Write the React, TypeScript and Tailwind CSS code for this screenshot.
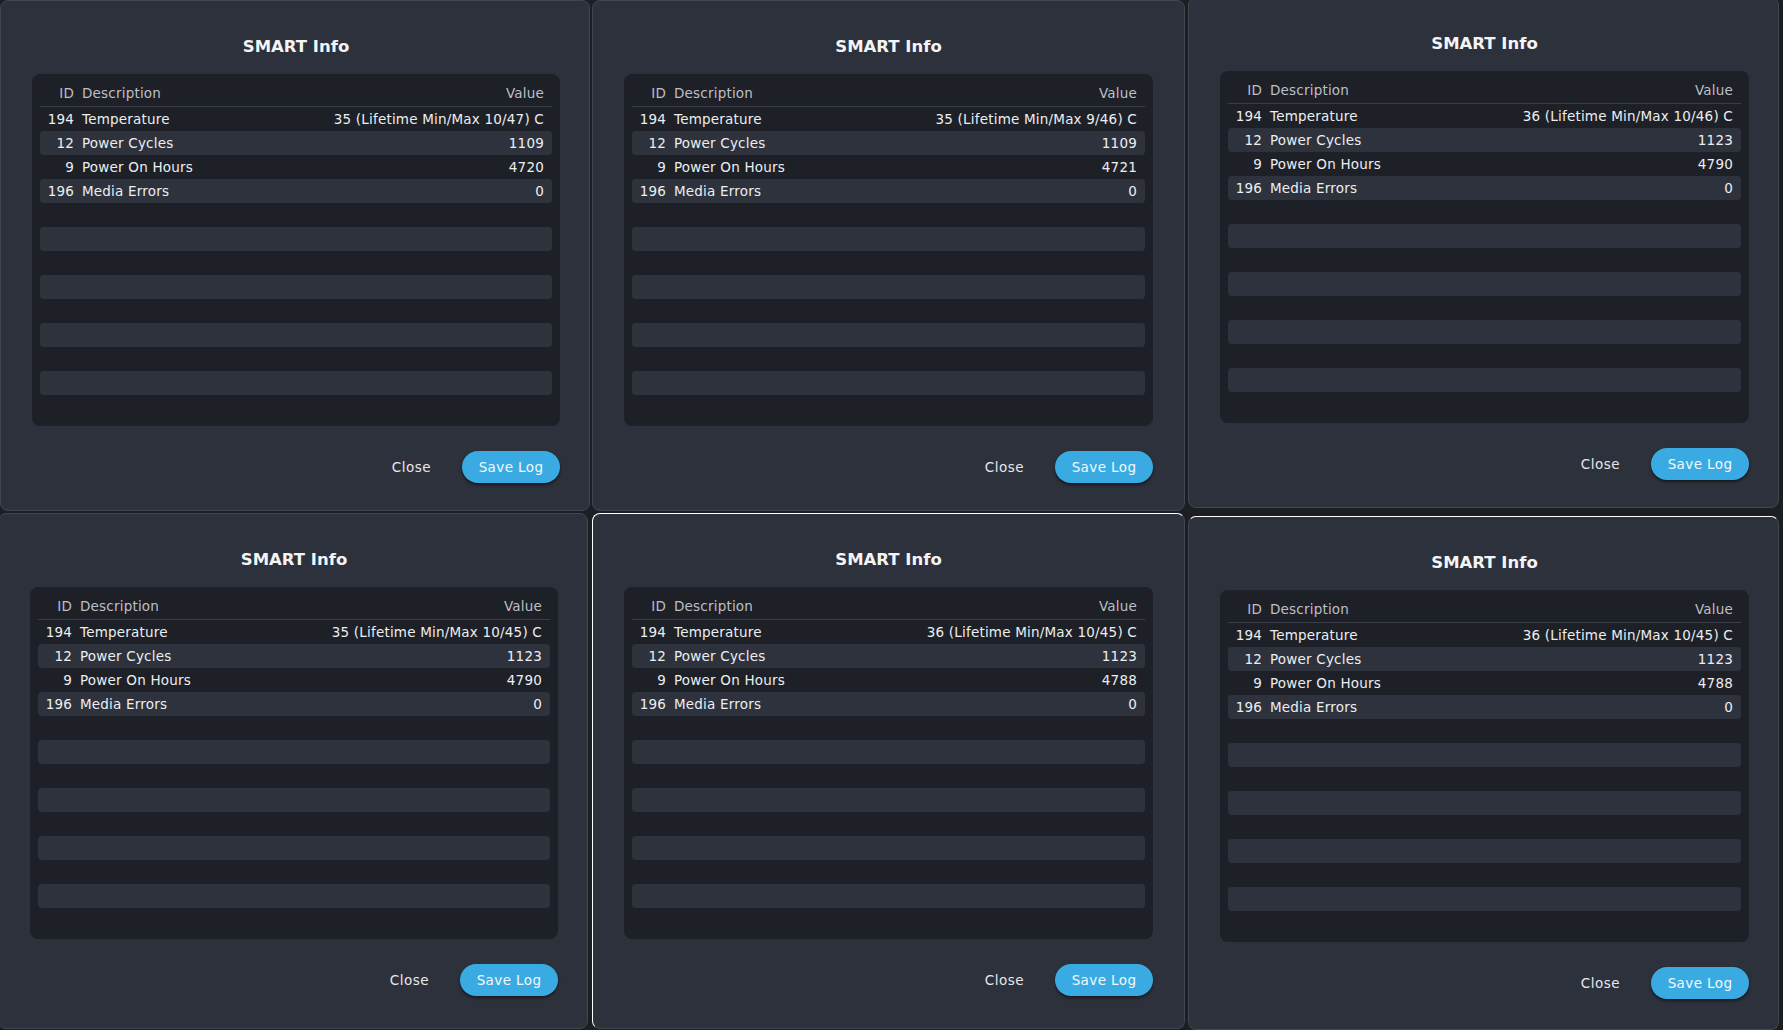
import React from 'react';

interface SmartRow {
  id: string;
  label: string;
  value: string;
}

interface DialogProps {
  rows: SmartRow[];
  className: string;
}

const snapshots = [
  { temp: '35 (Lifetime Min/Max 10/47) C', cycles: '1109', hours: '4720' },
  { temp: '35 (Lifetime Min/Max 9/46) C', cycles: '1109', hours: '4721' },
  { temp: '36 (Lifetime Min/Max 10/46) C', cycles: '1123', hours: '4790' },
  { temp: '35 (Lifetime Min/Max 10/45) C', cycles: '1123', hours: '4790' },
  { temp: '36 (Lifetime Min/Max 10/45) C', cycles: '1123', hours: '4788' },
  { temp: '36 (Lifetime Min/Max 10/45) C', cycles: '1123', hours: '4788' },
];

const toRows = (s: { temp: string; cycles: string; hours: string }): SmartRow[] => [
  { id: '194', label: 'Temperature', value: s.temp },
  { id: '12', label: 'Power Cycles', value: s.cycles },
  { id: '9', label: 'Power On Hours', value: s.hours },
  { id: '196', label: 'Media Errors', value: '0' },
];

const SmartDialog: React.FC<DialogProps> = ({ rows, className }) => {
  // pad the table out with empty striped rows like the real list view
  const filled: (SmartRow | null)[] = [...rows];
  while (filled.length < 13) filled.push(null);

  return (
    <div className={`flex flex-col rounded-[8px] border bg-[#2d313b] pl-[31px] ${className}`}>
      <h2 className="pt-[35px] pb-[16px] text-center text-[16.5px] leading-[22px] font-bold text-[#f3f4f6]">
        SMART Info
      </h2>

      <div className="h-[352px] overflow-hidden rounded-[8px] bg-[#1e2027] px-2 pt-2 tracking-[0.2px]">
        <div className="flex h-[25px] items-center border-b border-[#393d47] pb-[1px] text-[#bcbfc6]">
          <span className="w-[34px] text-right">ID</span>
          <span className="ml-[8px] flex-1">Description</span>
          <span className="pr-2">Value</span>
        </div>
        {filled.map((row, i) => (
          <div
            key={i}
            className={`flex h-[24px] items-center rounded-[4px] text-[#eceef0] ${
              i % 2 === 1 ? 'bg-[#2e323d]' : ''
            }`}
          >
            {row && (
              <>
                <span className="w-[34px] text-right">{row.id}</span>
                <span className="ml-[8px] flex-1">{row.label}</span>
                <span className="pr-2">{row.value}</span>
              </>
            )}
          </div>
        ))}
      </div>

      <div className="mt-[25px] flex items-center justify-end">
        <button className="tracking-[0.5px] text-[#e6e7ea]">Close</button>
        <button className="ml-[31px] h-[32px] w-[98px] rounded-full bg-[#3aabe2] tracking-[0.4px] text-[#f2f8fc] shadow-[0_2px_3px_rgba(0,0,0,0.5)]">
          Save Log
        </button>
      </div>
    </div>
  );
};

export default function App() {
  const data = snapshots.map(toRows);

  return (
    <div className="flex h-[1030px] w-[1783px] flex-col overflow-hidden bg-[#1c1e23] text-[13.5px] [font-family:'DejaVu_Sans',sans-serif]">
      {/* top row */}
      <div className="flex h-[511px] shrink-0">
        <SmartDialog rows={data[0]} className="h-[511px] w-[590px] pr-[29px] border-[#42464f]" />
        <SmartDialog rows={data[1]} className="ml-[2px] h-[511px] w-[593px] pr-[31px] border-[#42464f]" />
        <SmartDialog
          rows={data[2]}
          className="-mt-[3px] ml-[3px] h-[511px] w-[591px] pr-[29px] border-[#42464f]"
        />
      </div>

      {/* bottom row */}
      <div className="mt-[2px] flex h-[517px] shrink-0">
        <SmartDialog rows={data[3]} className="-ml-[2px] h-[516px] w-[590px] pr-[29px] border-[#42464f]" />
        <SmartDialog
          rows={data[4]}
          className="ml-[4px] h-[516px] w-[593px] pr-[31px] border-[#42464f] border-t-white border-l-white"
        />
        <SmartDialog
          rows={data[5]}
          className="ml-[3px] mt-[3px] h-[514px] w-[591px] pr-[29px] border-[#42464f] border-t-white"
        />
      </div>
    </div>
  );
}
